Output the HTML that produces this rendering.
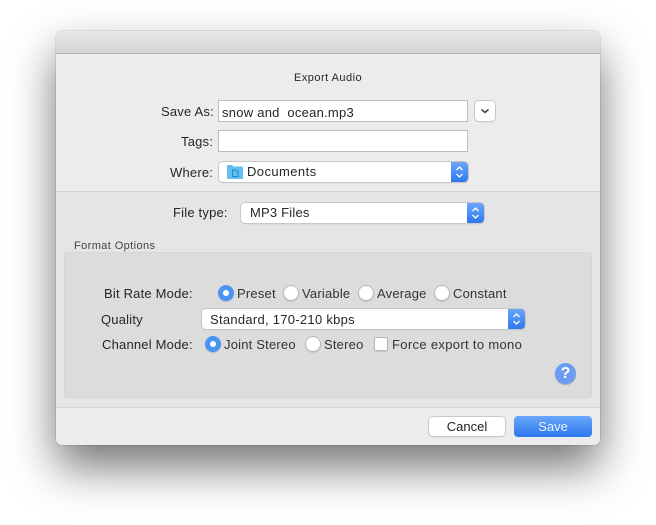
<!DOCTYPE html>
<html><head><meta charset="utf-8">
<style>
html,body{margin:0;padding:0;background:#fff}
#r{position:relative;width:656px;height:525px;overflow:hidden;background:#fff;font-family:"Liberation Sans",sans-serif;color:#262626;font-size:13px}
#r div,#r span.t{position:absolute}
.t{white-space:nowrap;line-height:16px;letter-spacing:.2px}
#win{left:56px;top:31px;width:544px;height:414px;border-radius:6px;background:#ececec;overflow:hidden}
#shadow{left:56px;top:31px;width:544px;height:414px;border-radius:6px;box-shadow:0 22px 45px 0 rgba(0,0,0,.55),0 0 1px rgba(0,0,0,.55)}
.field{background:#fff;border:1px solid #bdbdbd;box-sizing:border-box}
.pop{background:#fff;border-radius:4px;box-shadow:0 0 0 1px #c8c8c8,0 1px 1px rgba(0,0,0,.22);overflow:hidden}
.step{top:0;right:0;bottom:0;width:17px;background:linear-gradient(#6ba6fb,#2d78f0)}
.radio{width:16px;height:16px;border-radius:50%;background:#fff;box-shadow:inset 0 0 0 1px #b5b5b5,0 1px 1px rgba(0,0,0,.12)}
.radio.on{background:#4b94f4;box-shadow:0 1px 1px rgba(0,0,0,.15)}
.radio.on::after{content:"";position:absolute;left:5px;top:5px;width:6px;height:6px;border-radius:50%;background:#fff}
</style></head><body>
<div id="r">
<div id="shadow"></div>
<div id="win">
  <div style="left:0;top:0;width:544px;height:22px;background:linear-gradient(#e9e9e9,#d4d4d4);border-bottom:1px solid #b3b3b3"></div>
  <div style="left:0;top:160px;width:544px;height:215px;background:#e5e5e5;border-top:1px solid #d6d6d6;border-bottom:1px solid #d4d4d4"></div>
</div>

<span class="t" style="left:294px;top:70px;font-size:11px;letter-spacing:.48px">Export Audio</span>

<span class="t" style="left:161px;top:104px">Save As:</span>
<div class="field" style="left:218px;top:100px;width:250px;height:22px"></div>
<span class="t" style="left:222px;top:105px;white-space:pre;letter-spacing:.25px">snow and  ocean.mp3</span>
<div class="pop" style="left:475px;top:101px;width:20px;height:20px;border-radius:4px">
  <svg style="position:absolute;left:0;top:0" width="20" height="20"><path d="M6.500 8.500L10 11.500L13.500 8.500" fill="none" stroke="#444" stroke-width="1.500"/></svg>
</div>

<span class="t" style="left:181px;top:134px">Tags:</span>
<div class="field" style="left:218px;top:130px;width:250px;height:22px"></div>

<span class="t" style="left:170px;top:165px">Where:</span>
<div class="pop" style="left:219px;top:162px;width:249px;height:20px">
  <div class="step"><svg style="position:absolute;left:0;top:0" width="17" height="20"><path d="M5.500 8L8.500 5L11.500 8M5.500 12L8.500 15L11.500 12" fill="none" stroke="#fff" stroke-width="1.300"/></svg></div>
</div>
<svg style="position:absolute;left:227px;top:164px" width="16" height="15"><path d="M0 2.500Q0 1 1.500 1H5L6.500 2.500H14.500Q16 2.500 16 4V13.500Q16 15 14.500 15H1.500Q0 15 0 13.500Z" fill="#62bdf0"/><path d="M5.500 6H9.500L11 7.500V12.500H5.500Z" fill="none" stroke="#2a86c4" stroke-width="1"/></svg>
<span class="t" style="left:247px;top:164px;letter-spacing:.42px">Documents</span>

<span class="t" style="left:173px;top:205px">File type:</span>
<div class="pop" style="left:241px;top:203px;width:243px;height:20px">
  <div class="step"><svg style="position:absolute;left:0;top:0" width="17" height="20"><path d="M5.500 8L8.500 5L11.500 8M5.500 12L8.500 15L11.500 12" fill="none" stroke="#fff" stroke-width="1.300"/></svg></div>
</div>
<span class="t" style="left:250px;top:205px">MP3 Files</span>

<span class="t" style="left:74px;top:238px;font-size:11px;color:#444;letter-spacing:.4px">Format Options</span>
<div style="left:64px;top:252px;width:528px;height:146px;background:#dcdcdc;border-radius:4px;box-shadow:inset 0 0 0 1px #d6d6d6"></div>

<span class="t" style="left:104px;top:286px">Bit Rate Mode:</span>
<div class="radio on" style="left:218px;top:285px"></div><span class="t" style="left:237px;top:286px;color:#333">Preset</span>
<div class="radio" style="left:283px;top:285px"></div><span class="t" style="left:302px;top:286px;color:#333">Variable</span>
<div class="radio" style="left:358px;top:285px"></div><span class="t" style="left:377px;top:286px;color:#333">Average</span>
<div class="radio" style="left:434px;top:285px"></div><span class="t" style="left:453px;top:286px;color:#333">Constant</span>

<span class="t" style="left:101px;top:312px">Quality</span>
<div class="pop" style="left:202px;top:309px;width:323px;height:20px">
  <div class="step"><svg style="position:absolute;left:0;top:0" width="17" height="20"><path d="M5.500 8L8.500 5L11.500 8M5.500 12L8.500 15L11.500 12" fill="none" stroke="#fff" stroke-width="1.300"/></svg></div>
</div>
<span class="t" style="left:210px;top:312px;letter-spacing:.28px">Standard, 170-210 kbps</span>

<span class="t" style="left:102px;top:337px">Channel Mode:</span>
<div class="radio on" style="left:205px;top:336px"></div><span class="t" style="left:224px;top:337px;color:#333">Joint Stereo</span>
<div class="radio" style="left:305px;top:336px"></div><span class="t" style="left:324px;top:337px;color:#333">Stereo</span>
<div style="left:374px;top:337px;width:14px;height:14px;background:#fff;border-radius:2.500px;box-shadow:inset 0 0 0 1px #b5b5b5,0 1px 1px rgba(0,0,0,.12)"></div>
<span class="t" style="left:392px;top:337px;color:#333;letter-spacing:.33px">Force export to mono</span>

<div style="left:555px;top:363px;width:21px;height:21px;border-radius:50%;background:#6b9bf2;box-shadow:0 1px 1px rgba(0,0,0,.25);color:#fff;font-weight:bold;font-size:16px;line-height:21px;text-align:center">?</div>

<div class="pop" style="left:429px;top:417px;width:76px;height:19px;text-align:center;line-height:19px;font-size:13px;color:#222">Cancel</div>
<div style="left:514px;top:416px;width:78px;height:21px;border-radius:4px;background:linear-gradient(#6aa7fa,#2b78f0);text-align:center;line-height:21px;color:#eaf3ff;font-size:13px">Save</div>
</div>
</body></html>
